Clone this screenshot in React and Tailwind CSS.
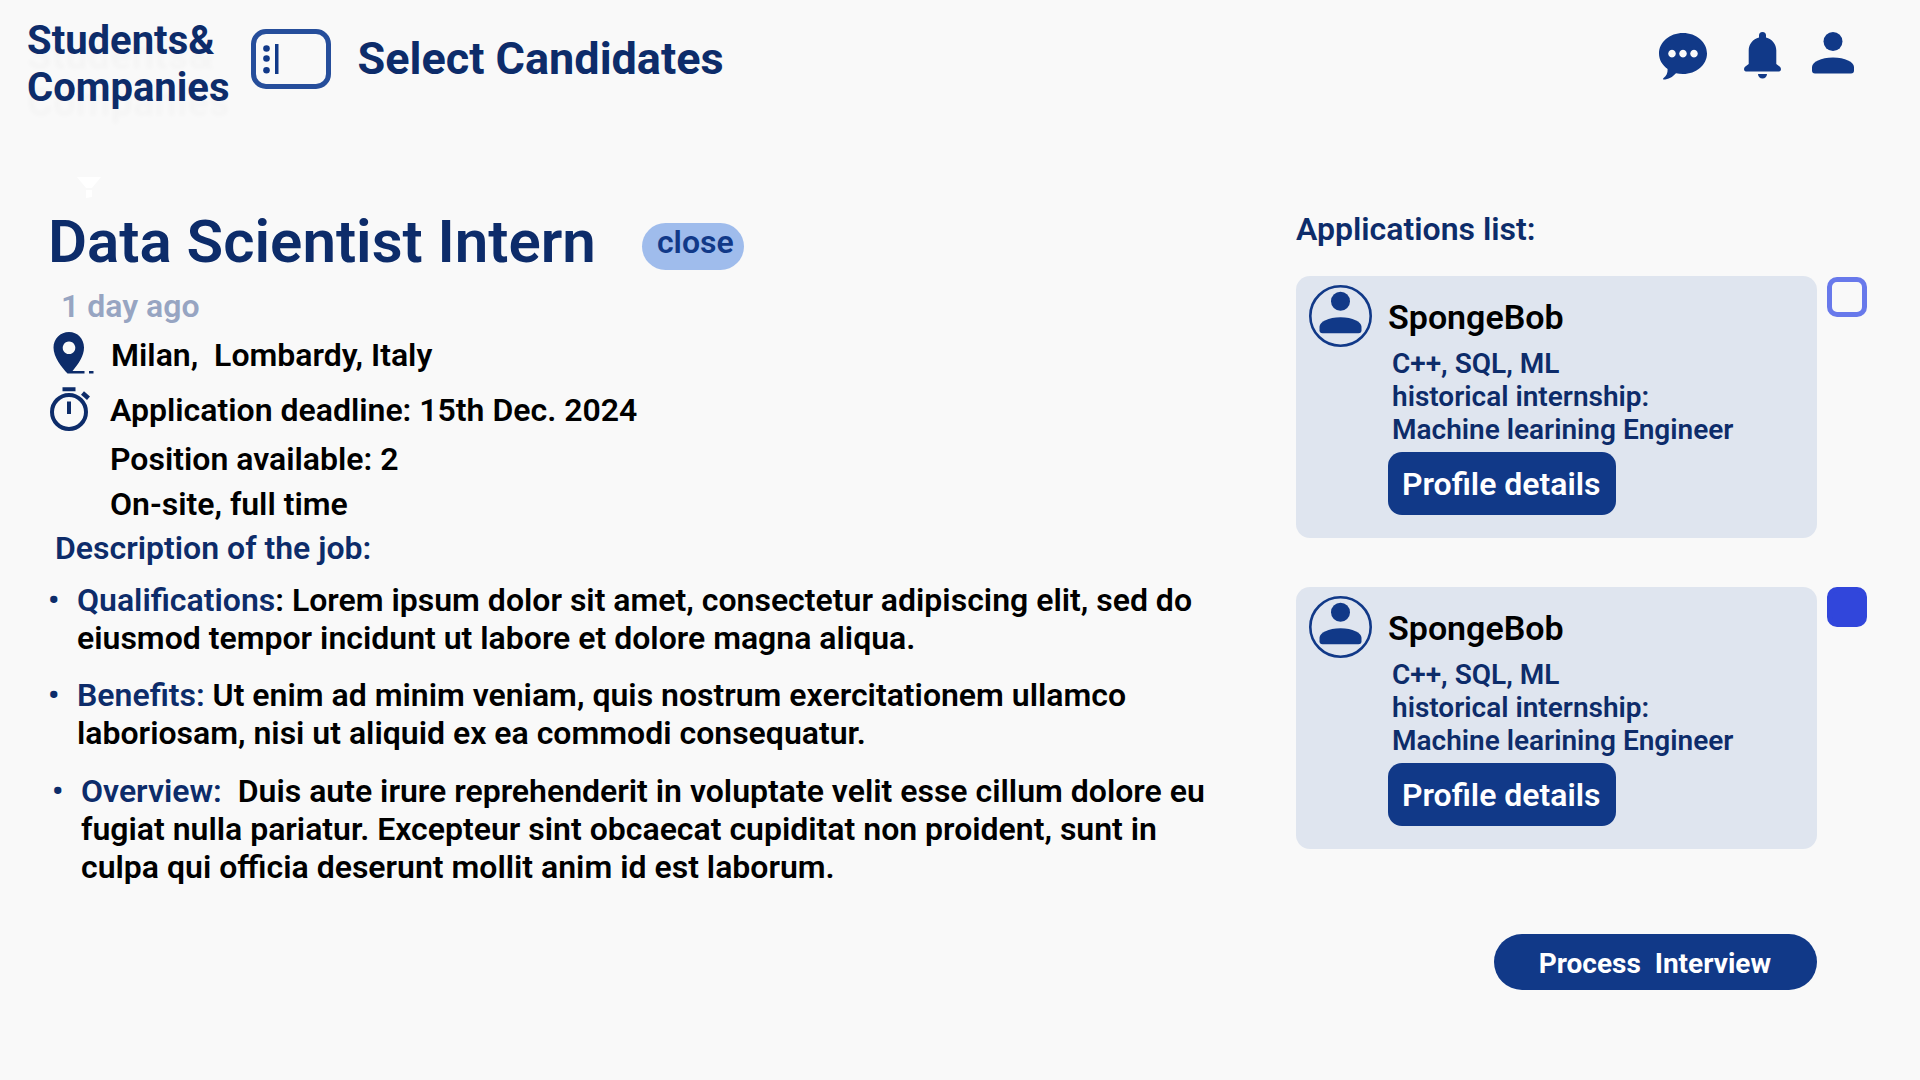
import React from "react";

const applications = [
  { id: "first", name: "SpongeBob", selected: false },
  { id: "second", name: "SpongeBob", selected: true },
];

function PersonShape() {
  return (
    <>
      <circle cx="21" cy="9.5" r="9.5" />
      <path d="M0 38.5V35C0 30 9 25.5 21 25.5S42 30 42 35V38.5Q42 41.500 39 41.500H3Q0 41.500 0 38.500Z" />
    </>
  );
}

function PersonIcon() {
  return (
    <svg width="42" height="42" viewBox="0 0 42 42" fill="currentColor" aria-hidden="true">
      <PersonShape />
    </svg>
  );
}

function AvatarIcon() {
  return (
    <svg className="block" width="63" height="62" viewBox="0 0 63 62" fill="currentColor" aria-hidden="true">
      <ellipse cx="31.500" cy="31" rx="30.200" ry="29.700" fill="none" stroke="currentColor" strokeWidth="2.600" />
      <g transform="translate(10.500 6.800)">
        <PersonShape />
      </g>
    </svg>
  );
}

function ChatIcon() {
  return (
    <svg width="48" height="47" viewBox="0 0 48 47" fill="currentColor" aria-hidden="true">
      <path
        fillRule="evenodd"
        d="M24 0C37.300 0 48 9.100 48 20.500S37.300 41 24 41C21.500 41 19.200 40.700 17 40.200C13.500 44 9.500 46.500 4.500 46.500Q3.200 46 4.600 45C7.500 43 8.800 40 8.600 36C3.300 32.200 0 26.700 0 20.500C0 9.100 10.700 0 24 0ZM13 16.800a3.800 3.800 0 1 0 .01 0ZM24 16.800a3.800 3.800 0 1 0 .01 0ZM35 16.800a3.800 3.800 0 1 0 .01 0Z"
      />
    </svg>
  );
}

function BellIcon() {
  return (
    <svg width="37" height="47" viewBox="0 0 37 47" fill="currentColor" aria-hidden="true">
      <path d="M15 5.500V3.600a3.500 3.500 0 0 1 7 0V5.500C28 7 32.300 12 32.300 18.500V32L35.600 34.500C37.500 36 37.500 39.500 35 39.500H2C-.5 39.500 -.5 36 1.400 34.500L4.700 32V18.500C4.700 12 9 7 15 5.500Z" />
      <path d="M14 42H23C23 44.500 21 46.500 18.500 46.500S14 44.500 14 42Z" />
    </svg>
  );
}

function PinIcon() {
  return (
    <svg width="41" height="42" viewBox="0 0 41 42" fill="currentColor" aria-hidden="true">
      <path
        fillRule="evenodd"
        d="M16 0C24.600 0 31 6.800 31 15.500C31 24 25.500 32 19.500 39H31.500V41.500H14.500C8.500 35 .5 25 .5 15.500C.5 6.800 7.400 0 16 0ZM16 9.500a6.300 6.300 0 1 0 .01 0Z"
      />
      <path d="M36 39h4.500v2.500H36Z" />
    </svg>
  );
}

function StopwatchIcon() {
  return (
    <svg width="40" height="44" viewBox="0 0 40 44" fill="none" stroke="currentColor" strokeWidth="4" aria-hidden="true">
      <circle cx="19" cy="25" r="17" />
      <path d="M12.500 2.200H25.500M19 14.500V27" />
      <path d="M32.500 6L38.500 11.200" strokeWidth="4.500" />
    </svg>
  );
}

function ApplicationItem({ id, name, selected }) {
  return (
    <li className="flex items-start gap-2.5">
      <article className="flex flex-1 items-start gap-4 rounded-[14px] bg-[#dfe5ef] pt-[9px] pr-4 pb-[23px] pl-[13px]">
        <div className="text-[#113988]">
          <AvatarIcon />
        </div>
        <div className="pt-3">
          <h3 className="text-[34px] leading-10 text-black">{name}</h3>
          <p className="mt-2.5 pl-1 text-[28px] leading-[33px] text-[#0d2c6a]">
            C++, SQL, ML
            <br />
            historical internship:
            <br />
            Machine learining Engineer
          </p>
          <button
            type="button"
            className="mt-1.5 block rounded-[14px] bg-[#113988] pt-[13px] pr-[15px] pb-[11px] pl-3.5 text-[32px] leading-[39px] text-white"
          >
            Profile details
          </button>
        </div>
      </article>
      <input
        id={id}
        type="checkbox"
        defaultChecked={selected}
        aria-label={`Select ${name}`}
        className="mt-px size-10 shrink-0 appearance-none rounded-[10px] border-5 border-[#6879eb] checked:mt-0 checked:border-[#3146db] checked:bg-[#3146db]"
      />
    </li>
  );
}

export default function App() {
  return (
    <div className="min-h-screen bg-[#f9f9f9] font-[Roboto,sans-serif] font-semibold text-black">
      <header className="flex items-start pt-[17px] pr-[66px] pl-[27px]">
        <a href="#home" className="text-[40px] leading-[47px] font-bold text-[#0d2c6a] [text-shadow:0_15px_4px_rgba(0,0,0,0.02)]">
          Students&amp;
          <br />
          Companies
        </a>
        <button type="button" aria-label="Toggle menu" className="mt-3 ml-[22px] flex h-[60px] w-20 items-center rounded-[15px] border-5 border-[#264e9b] pl-[7px]">
          <svg width="16" height="30" viewBox="0 0 16 30" fill="#113988" aria-hidden="true">
            <circle cx="3.500" cy="4.500" r="3.300" />
            <circle cx="3.500" cy="14.500" r="3.300" />
            <circle cx="3.500" cy="26.300" r="3.300" />
            <path d="M12 0h3.500v30H12Z" />
          </svg>
        </button>
        <h1 className="mt-[15px] ml-[26px] text-[45px] leading-[53px] font-bold text-[#0d2c6a]">Select Candidates</h1>
        <nav className="mt-[15px] ml-auto flex items-start text-[#113988]">
          <button type="button" aria-label="Messages" className="mt-px mr-[37px]">
            <ChatIcon />
          </button>
          <button type="button" aria-label="Notifications" className="mr-[31px]">
            <BellIcon />
          </button>
          <button type="button" aria-label="Profile">
            <PersonIcon />
          </button>
        </nav>
      </header>

      <main className="flex items-start gap-[76px] pt-[66px] pr-[53px] pl-12">
        <section className="flex-1 text-[32px] leading-[38px]">
          <svg className="ml-[29px] block" width="24" height="21" viewBox="0 0 24 21" fill="#ffffff" aria-hidden="true">
            <path d="M0 0H24L15 11H9ZM9 13H15V20L9 21Z" />
          </svg>
          <div className="mt-[9px] flex items-start gap-[46px]">
            <h2 className="text-[60px] leading-[70px] text-[#0d2c6a]">Data Scientist Intern</h2>
            <button type="button" className="mt-4 h-[47px] rounded-full bg-[#9fbcec] pr-2.5 pb-[9px] pl-[15px] leading-[38px] text-[#113988]">
              close
            </button>
          </div>
          <p className="mt-2.5 pl-[13px] text-[#97a5c2]">1 day ago</p>
          <div className="mt-[7px] flex items-start pl-[5px] text-[#0d2c6a]">
            <PinIcon />
            <p className="mt-1 ml-[17px] whitespace-pre text-black">Milan,  Lombardy, Italy</p>
          </div>
          <div className="mt-[13px] flex items-start pl-0.5 text-[#0d2c6a]">
            <StopwatchIcon />
            <p className="mt-1 ml-5 text-black">Application deadline: 15th Dec. 2024</p>
          </div>
          <p className="mt-[9px] pl-[62px]">Position available: 2</p>
          <p className="mt-[7px] pl-[62px]">On-site, full time</p>
          <h3 className="mt-1.5 pl-[7px] text-[#0d2c6a]">Description of the job:</h3>
          <ul className="mt-3.5">
            <li className="flex">
              <span className="w-[29px] shrink-0 text-[#0d2c6a]" aria-hidden="true">•</span>
              <p><span className="text-[#0d2c6a]">Qualifications</span>: Lorem ipsum dolor sit amet, consectetur adipiscing elit, sed do eiusmod tempor incidunt ut labore et dolore magna aliqua.</p>
            </li>
            <li className="mt-[19px] flex">
              <span className="w-[29px] shrink-0 text-[#0d2c6a]" aria-hidden="true">•</span>
              <p><span className="text-[#0d2c6a]">Benefits:</span> Ut enim ad minim veniam, quis nostrum exercitationem ullamco laboriosam, nisi ut aliquid ex ea commodi consequatur.</p>
            </li>
            <li className="mt-5 flex pl-1">
              <span className="w-[29px] shrink-0 text-[#0d2c6a]" aria-hidden="true">•</span>
              <p><span className="text-[#0d2c6a]">Overview:</span>&nbsp; Duis aute irure reprehenderit in voluptate velit esse cillum dolore eu fugiat nulla pariatur. Excepteur sint obcaecat cupiditat non proident, sunt in culpa qui officia deserunt mollit anim id est laborum.</p>
            </li>
          </ul>
        </section>

        <section className="w-[571px] shrink-0 pt-[33px]">
          <h2 className="text-[32px] leading-[38px] text-[#0d2c6a]">Applications list:</h2>
          <ul className="mt-7 flex flex-col gap-[49px]">
            {applications.map((application) => (
              <ApplicationItem key={application.id} {...application} />
            ))}
          </ul>
          <div className="mt-[85px] flex justify-end pr-[50px]">
            <button type="button" className="h-14 rounded-full bg-[#113988] pt-0.5 pr-[46px] pl-[45px] text-[28px] leading-[33px] font-bold whitespace-pre text-white">
              Process  Interview
            </button>
          </div>
        </section>
      </main>
    </div>
  );
}
